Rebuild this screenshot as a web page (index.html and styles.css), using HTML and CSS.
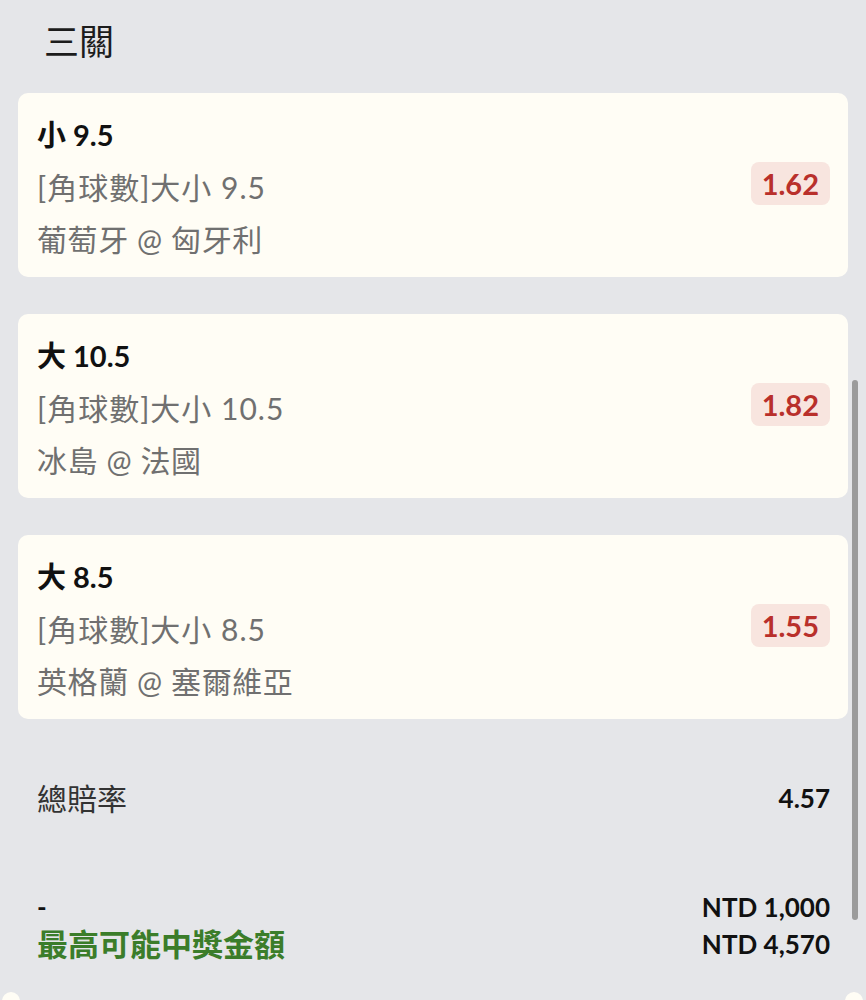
FILE: index.html
```html
<!DOCTYPE html>
<html lang="zh-Hant">
<head>
    <meta charset="UTF-8">
    <meta name="viewport" content="width=device-width, initial-scale=1.0">
    <title>三關</title>
    <link rel="stylesheet" href="styles.css">
</head>
<body>
    <div id="slip">
        <h2 class="slip-title">三關</h2>

        <div class="legs">
            <div class="leg">
                <div class="leg-info">
                    <div class="leg-pick">小 9.5</div>
                    <div class="leg-market">[角球數]大小 9.5</div>
                    <div class="leg-match">葡萄牙 @ 匈牙利</div>
                </div>
                <span class="odds">1.62</span>
            </div>

            <div class="leg">
                <div class="leg-info">
                    <div class="leg-pick">大 10.5</div>
                    <div class="leg-market">[角球數]大小 10.5</div>
                    <div class="leg-match">冰島 @ 法國</div>
                </div>
                <span class="odds">1.82</span>
            </div>

            <div class="leg">
                <div class="leg-info">
                    <div class="leg-pick">大 8.5</div>
                    <div class="leg-market">[角球數]大小 8.5</div>
                    <div class="leg-match">英格蘭 @ 塞爾維亞</div>
                </div>
                <span class="odds">1.55</span>
            </div>
        </div>

        <div class="total-row">
            <span class="total-label">總賠率</span>
            <span class="total-value">4.57</span>
        </div>

        <div class="payout">
            <div class="payout-row">
                <span class="stake-label">-</span>
                <span class="amount">NTD 1,000</span>
            </div>
            <div class="payout-row">
                <span class="win-label">最高可能中獎金額</span>
                <span class="amount">NTD 4,570</span>
            </div>
        </div>
    </div>

    <div class="scrollbar"></div>
    <div class="corner corner-left"></div>
    <div class="corner corner-right"></div>
</body>
</html>
```

FILE: styles.css
```css
body {
    font-family: Lato, "Noto Sans CJK TC", sans-serif;
    background-color: #e5e6e9;
    margin: 0;
    padding: 0;
    height: 1000px;
    overflow: hidden;
    position: relative;
}
#slip {
    padding: 0 18px;
}
.slip-title {
    margin: 0;
    padding: 17px 26px 28px;
    font-size: 35px;
    line-height: 48px;
    font-weight: 400;
    color: #1c1c1c;
}
.legs {
    display: flex;
    flex-direction: column;
    gap: 37px;
}
.leg {
    background-color: #fffdf5;
    border-radius: 10px;
    padding: 16px 18px 12px 19px;
    display: flex;
    align-items: center;
    justify-content: space-between;
}
.leg-info {
    line-height: 52px;
}
.leg-pick {
    font-size: 29px;
    font-weight: 700;
    color: #111;
}
.leg-market,
.leg-match {
    font-size: 30px;
    letter-spacing: 0.6px;
    color: #707070;
}
.leg-market {
    letter-spacing: 1px;
}
.odds {
    background-color: #f8e5df;
    color: #b9302b;
    font-size: 29px;
    font-weight: 700;
    line-height: 43px;
    padding: 0 11px;
    margin-bottom: 7px;
    border-radius: 8px;
}
.total-row {
    display: flex;
    justify-content: space-between;
    align-items: center;
    margin-top: 59px;
    padding: 0 18px 0 19px;
    line-height: 40px;
}
.total-label {
    font-size: 30px;
    color: #333;
}
.total-value {
    font-size: 26px;
    font-weight: 700;
    color: #111;
}
.payout {
    margin-top: 71px;
    padding: 0 18px 0 19px;
}
.payout-row {
    display: flex;
    justify-content: space-between;
    align-items: center;
    line-height: 37px;
}
.stake-label {
    font-size: 26px;
    font-weight: 700;
    color: #111;
}
.win-label {
    font-size: 31px;
    font-weight: 700;
    color: #3b7d2a;
}
.amount {
    font-size: 26px;
    font-weight: 700;
    color: #111;
}
.scrollbar {
    position: absolute;
    left: 852px;
    top: 380px;
    width: 6px;
    height: 540px;
    border-radius: 3px;
    background-color: #9b9b9b;
}
.corner {
    position: absolute;
    top: 992px;
    width: 18px;
    height: 18px;
    border-radius: 50%;
    background-color: #fffdf5;
}
.corner-left {
    left: 2px;
}
.corner-right {
    left: 845px;
}
```
